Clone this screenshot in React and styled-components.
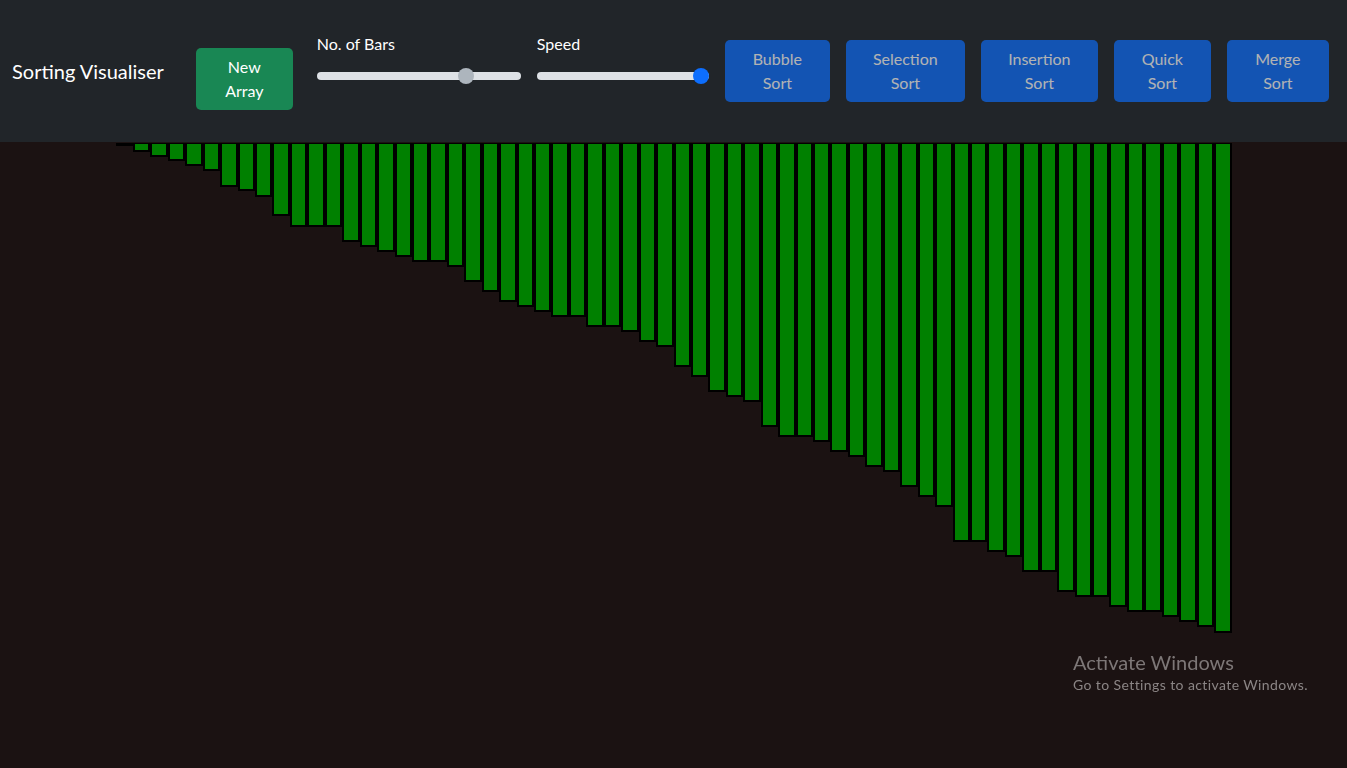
import React, { useState } from "react";
import styled, { createGlobalStyle } from "styled-components";

// bar heights in px, read off the reference (already sorted)
const BAR_HEIGHTS = [
  2, 9, 14, 18, 23, 28, 44, 48, 54, 73, 84, 84, 84, 99, 104, 109, 114, 119,
  119, 124, 139, 149, 159, 164, 169, 174, 174, 184, 184, 189, 199, 204, 224,
  234, 249, 254, 259, 284, 294, 294, 299, 309, 314, 324, 329, 344, 354, 364,
  399, 399, 409, 414, 429, 429, 449, 454, 454, 464, 469, 469, 474, 479, 484,
  490,
];

const ALGORITHMS = [
  { name: "Bubble Sort", width: 105 },
  { name: "Selection Sort", width: 119 },
  { name: "Insertion Sort", width: 117 },
  { name: "Quick Sort", width: 97 },
  { name: "Merge Sort", width: 102 },
];

const App = () => {
  const [bars, setBars] = useState(65);
  const [speed, setSpeed] = useState(100);

  return (
    <>
      <GlobalStyle />
      <Page>
        <Navbar>
          <Brand>Sorting Visualiser</Brand>
          <Button $variant="success" $width={97} $offset={16}>
            New Array
          </Button>
          <SliderGroup $gap={24}>
            <SliderLabel>No. of Bars</SliderLabel>
            <Range
              type="range"
              min={5}
              max={85}
              value={bars}
              disabled
              $width={204}
              onChange={(e) => setBars(Number(e.target.value))}
            />
          </SliderGroup>
          <SliderGroup $gap={16}>
            <SliderLabel>Speed</SliderLabel>
            <Range
              type="range"
              min={1}
              max={100}
              value={speed}
              $width={172}
              onChange={(e) => setSpeed(Number(e.target.value))}
            />
          </SliderGroup>
          <Algorithms>
            {ALGORITHMS.map((algo) => (
              <Button key={algo.name} $variant="primary" $width={algo.width} disabled>
                {algo.name}
              </Button>
            ))}
          </Algorithms>
        </Navbar>

        <BarArea>
          {BAR_HEIGHTS.map((h, i) => (
            <Bar key={i} style={{ height: h }} />
          ))}
        </BarArea>

        <Watermark>
          <WatermarkTitle>Activate Windows</WatermarkTitle>
          <WatermarkText>Go to Settings to activate Windows.</WatermarkText>
        </Watermark>
      </Page>
    </>
  );
};

export default App;

const GlobalStyle = createGlobalStyle`
  * {
    box-sizing: border-box;
  }

  body {
    margin: 0;
    background-color: #1b1212;
    font-family: "Lato", "Open Sans", sans-serif;
  }
`;

const Page = styled.div`
  min-height: 100vh;
  background-color: #1b1212;
`;

const Navbar = styled.nav`
  height: 142px;
  background-color: #212529;
  display: flex;
  flex-direction: row;
  align-items: center;
  padding: 0 12px;
`;

const Brand = styled.span`
  color: #ffffff;
  font-size: 20px;
  line-height: 30px;
  white-space: nowrap;
  margin-right: 32px;
`;

const Button = styled.button`
  width: ${(p) => p.$width}px;
  height: 62px;
  margin-top: ${(p) => p.$offset || 0}px;
  padding: 6px 12px;
  border-radius: 5px;
  border: 1px solid transparent;
  font-family: inherit;
  font-size: 16px;
  line-height: 24px;
  color: #ffffff;
  text-align: center;
  background-color: ${(p) => (p.$variant === "success" ? "#198754" : "#0d6efd")};
  cursor: pointer;

  &:disabled {
    opacity: 0.65;
    cursor: default;
  }
`;

const SliderGroup = styled.div`
  display: flex;
  flex-direction: column;
  gap: 12px;
  margin-left: ${(p) => p.$gap}px;
  margin-bottom: 26px;
`;

const SliderLabel = styled.label`
  color: #ffffff;
  font-size: 16px;
  line-height: 24px;
`;

const Range = styled.input`
  -webkit-appearance: none;
  appearance: none;
  width: ${(p) => p.$width}px;
  height: 16px;
  margin: 0;
  padding: 0;
  background: transparent;

  &::-webkit-slider-runnable-track {
    height: 8px;
    border-radius: 4px;
    background-color: #dee2e6;
  }

  &::-webkit-slider-thumb {
    -webkit-appearance: none;
    appearance: none;
    width: 16px;
    height: 16px;
    margin-top: -4px;
    border-radius: 50%;
    border: none;
    background-color: #0d6efd;
  }

  &:disabled::-webkit-slider-thumb {
    background-color: #adb5bd;
  }
`;

const Algorithms = styled.div`
  display: flex;
  flex-direction: row;
  gap: 16px;
  margin-left: 16px;
`;

const BarArea = styled.div`
  display: flex;
  flex-direction: row;
  justify-content: center;
  align-items: flex-start;
  padding-top: 1px;
`;

const Bar = styled.div`
  flex-shrink: 0;
  width: 17.45px;
  min-height: 2px;
  background-color: #008000;
  border: 2px solid #000000;
  border-top-width: 1px;
`;

const Watermark = styled.div`
  position: fixed;
  left: 1073px;
  top: 649px;
  color: #8b8585;
  pointer-events: none;
`;

const WatermarkTitle = styled.div`
  font-size: 20px;
  line-height: 26px;
  color: #7d7777;
`;

const WatermarkText = styled.div`
  font-size: 14px;
  line-height: 20px;
  letter-spacing: 0.4px;
`;
